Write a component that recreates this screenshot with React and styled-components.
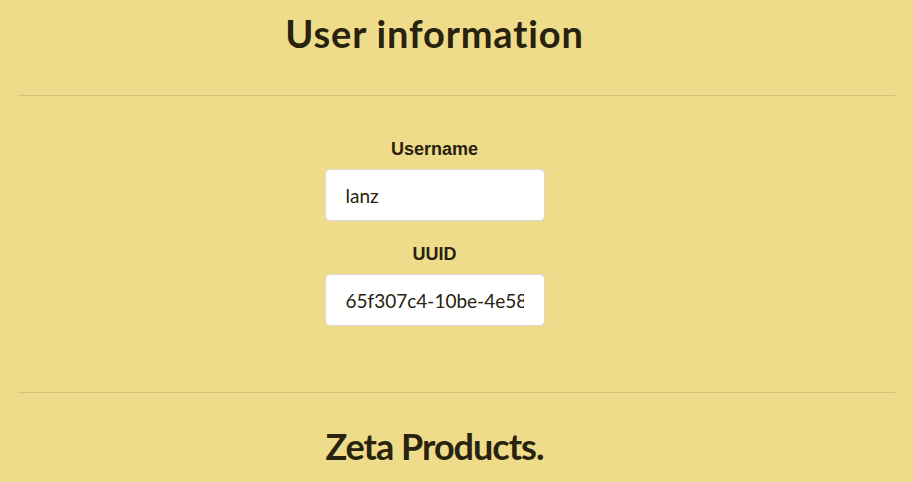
import React from "react";
import styled, { createGlobalStyle } from "styled-components";

const Global = createGlobalStyle`
  html, body { margin: 0; padding: 0; background: #efdc8a; }
  body { font-family: "Lato", "Liberation Sans", sans-serif; color: #28220f; }
`;

const Page = styled.div`
  padding: 0 18px;
`;

const Section = styled.section`
  display: flex;
  flex-direction: column;
  align-items: center;
  padding-right: 44px;
`;

const Title = styled.h1`
  margin: ${p => p.$mt}px 0 0;
  font-family: "Lato", sans-serif;
  font-weight: 700;
  font-size: ${p => p.$size}px;
  letter-spacing: ${p => p.$ls}px;
  line-height: 44px;
  font-variant-ligatures: none;
  color: #28220f;
`;

const Rule = styled.hr`
  margin: ${p => p.$mt}px 0 0;
  border: 0;
  border-top: 1px solid #d5c27e;
  height: 0;
`;

const Form = styled.div`
  display: flex;
  flex-direction: column;
  align-items: center;
  padding-top: 43px;
  padding-right: 44px;
`;

const Label = styled.label`
  font-family: "Liberation Sans", Arial, sans-serif;
  font-weight: 700;
  font-size: 18px;
  line-height: 20px;
  color: #28220f;
  margin-top: ${p => p.$mt}px;
`;

const Input = styled.input`
  box-sizing: border-box;
  width: 220px;
  height: 52px;
  margin-top: 10px;
  padding: 0 20px;
  border: 1px solid #dcdcdc;
  border-radius: 5px;
  background: #fff;
  font-family: "Lato", sans-serif;
  font-size: 19px;
  color: #28220f;
  outline: none;
`;

export default function App() {
  return (
    <>
      <Global />
      <Page>
        <Section>
          <Title $mt={11} $size={38} $ls={0.85}>User information</Title>
        </Section>
        <Rule $mt={40} />
        <Form>
          <Label $mt={0}>Username</Label>
          <Input readOnly value="lanz" />
          <Label $mt={23}>UUID</Label>
          <Input readOnly value="65f307c4-10be-4e58-9a1b-3c2d" />
        </Form>
        <Rule $mt={66} />
        <Section>
          <Title as="h2" $mt={31} $size={36} $ls={-1}>Zeta Products.</Title>
        </Section>
      </Page>
    </>
  );
}
